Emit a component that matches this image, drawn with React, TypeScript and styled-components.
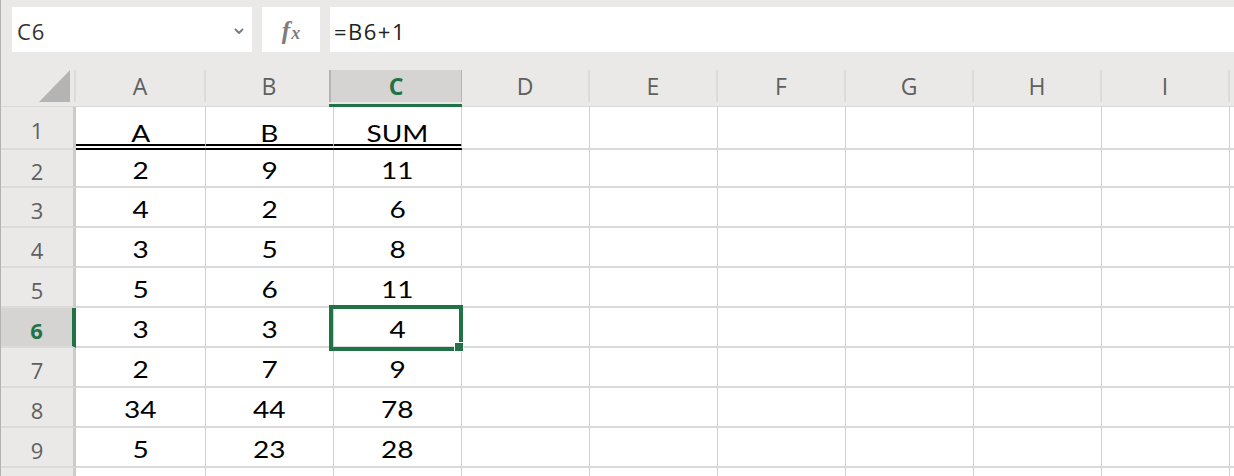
import React from 'react';
import styled, { createGlobalStyle } from 'styled-components';

const GREEN = '#217346';
const CHROME = '#eae9e8';

const GlobalStyle = createGlobalStyle`
    html, body {
        margin: 0;
        padding: 0;
        background: #fff;
        overflow: hidden;
    }

    * {
        box-sizing: border-box;
    }
`;

const Page = styled.div`
    width: 1234px;
    height: 476px;
    overflow: hidden;
    border-left: 1px solid #b3b3b3;
    font-family: "Open Sans", "Noto Sans", sans-serif;
`;

const Toolbar = styled.div`
    display: flex;
    gap: 10px;
    height: 62px;
    padding: 7px 0 0 11px;
    background: ${CHROME};
`;

const Box = styled.div`
    height: 45px;
    background: #fff;
    display: flex;
    align-items: center;
`;

const NameBox = styled(Box)`
    width: 240px;
    justify-content: space-between;
    padding: 3px 8px 0 5px;
    font-size: 22px;
    letter-spacing: 1px;
    color: #333;
`;

const FxBox = styled(Box)`
    width: 58px;
    justify-content: center;
    padding-top: 2px;
`;

const FxGlyph = styled.span`
    font-family: "Liberation Serif", "DejaVu Serif", serif;
    font-style: italic;
    font-weight: 700;
    font-size: 25px;
    color: #7d7d7d;

    & small {
        font-size: 18px;
        margin-left: 1px;
    }
`;

const FormulaBox = styled(Box)`
    flex: 1;
    padding: 3px 0 0 4px;
    font-size: 22px;
    letter-spacing: 1.5px;
    color: #222;
`;

const Sheet = styled.div`
    display: grid;
    grid-template-columns: 75px 130px repeat(8, 128px) 1fr;
    grid-template-rows: 45px 43px 38px repeat(8, 40px);
`;

const HeadCell = styled.div`
    background: ${CHROME};
    border-bottom: 1px solid #d9d9d9;
    padding: 8px 0 4px;
`;

const Corner = styled(HeadCell)`
    display: flex;
`;

const CornerInner = styled.div`
    flex: 1;
    display: flex;
    align-items: flex-end;
    justify-content: flex-end;
    padding-right: 4px;
    border-right: 2px solid #dcdbda;
`;

const Triangle = styled.div`
    width: 0;
    height: 0;
    border-left: 31px solid transparent;
    border-bottom: 32px solid #b4b4b4;
`;

const ColHead = styled(HeadCell)<{ $active?: boolean }>`
    display: flex;
    ${({ $active }) => $active && `
        margin: 0 -1px 0 -5px;
        padding-bottom: 2px;
        border-bottom: 3px solid ${GREEN};
    `}
`;

const ColLabel = styled.div<{ $active?: boolean }>`
    flex: 1;
    display: flex;
    align-items: center;
    justify-content: center;
    border-right: 2px solid #dcdbda;
    font-size: 23px;
    color: ${({ $active }) => ($active ? GREEN : '#5f5f5f')};
    font-weight: ${({ $active }) => ($active ? 700 : 400)};
    background: ${({ $active }) => ($active ? '#d5d4d3' : 'transparent')};
    ${({ $active }) => $active && `
        border-left: 2px solid #b4b4b4;
        border-right-color: #b4b4b4;
    `}
`;

const RowHead = styled.div<{ $active?: boolean }>`
    display: flex;
    align-items: center;
    justify-content: center;
    padding-top: 5px;
    background: ${({ $active }) => ($active ? '#d5d4d3' : CHROME)};
    border-right: ${({ $active }) => ($active ? `4px solid ${GREEN}` : '3px solid #cbcbcb')};
    border-bottom: 2px solid #dcdbda;
    font-size: 22px;
    color: ${({ $active }) => ($active ? GREEN : '#5f5f5f')};
    font-weight: ${({ $active }) => ($active ? 700 : 400)};
`;

const Cell = styled.div<{ $double?: boolean; $selected?: boolean; $edge?: boolean }>`
    display: flex;
    align-items: center;
    justify-content: center;
    padding-top: ${({ $double }) => ($double ? '15px' : '3px')};
    border-right: ${({ $edge }) => ($edge ? 'none' : '1px solid #d0d0d0')};
    border-bottom: ${({ $double }) => ($double ? '6px double #000' : '2px solid #dadada')};
    font-family: Lato, "Open Sans", sans-serif;
    font-size: 23px;
    color: #000;
    position: ${({ $selected }) => ($selected ? 'relative' : 'static')};
`;

const CellText = styled.span`
    display: inline-block;
    transform: scaleX(1.22);
`;

const Selection = styled.div`
    position: absolute;
    left: -5px;
    top: -3px;
    width: 134px;
    height: 46px;
    border: 4px solid ${GREEN};
    pointer-events: none;
`;

const FillHandle = styled.div`
    position: absolute;
    right: -5px;
    bottom: -5px;
    width: 10px;
    height: 10px;
    background: ${GREEN};
    border: 1px solid #fff;
`;

const columns = ['A', 'B', 'C', 'D', 'E', 'F', 'G', 'H', 'I'];
const activeCol = 2;
const activeRow = 6;

const data: (string | number)[][] = [
    ['A', 'B', 'SUM'],
    [2, 9, 11],
    [4, 2, 6],
    [3, 5, 8],
    [5, 6, 11],
    [3, 3, 4],
    [2, 7, 9],
    [34, 44, 78],
    [5, 23, 28],
    [],
];

const Chevron = () => (
    <svg width="10" height="7" viewBox="0 0 10 7">
        <path d="M1.5 1.5 L5 5 L8.5 1.5" fill="none" stroke="#7a7a7a" strokeWidth="1.8" strokeLinecap="round" strokeLinejoin="round" />
    </svg>
);

const App: React.FC = () => (
    <>
        <GlobalStyle />
        <Page>
            <Toolbar>
                <NameBox>
                    <span>C6</span>
                    <Chevron />
                </NameBox>
                <FxBox>
                    <FxGlyph>
                        f<small>x</small>
                    </FxGlyph>
                </FxBox>
                <FormulaBox>=B6+1</FormulaBox>
            </Toolbar>
            <Sheet>
                <Corner>
                    <CornerInner>
                        <Triangle />
                    </CornerInner>
                </Corner>
                {columns.map((c, i) => (
                    <ColHead key={c} $active={i === activeCol}>
                        <ColLabel $active={i === activeCol}>{c}</ColLabel>
                    </ColHead>
                ))}
                <HeadCell />
                {data.flatMap((row, r) => {
                    const rowNo = r + 1;
                    // the 10th row only peeks in at the bottom edge, its number is out of view
                    const visible = rowNo < data.length;
                    return [
                        <RowHead key={`h${rowNo}`} $active={rowNo === activeRow}>
                            {visible && rowNo}
                        </RowHead>,
                        ...columns.map((c, i) => {
                            const selected = rowNo === activeRow && i === activeCol;
                            return (
                                <Cell key={`${c}${rowNo}`} $double={rowNo === 1 && i < 3} $selected={selected}>
                                    {row[i] !== undefined && <CellText>{row[i]}</CellText>}
                                    {selected && (
                                        <Selection>
                                            <FillHandle />
                                        </Selection>
                                    )}
                                </Cell>
                            );
                        }),
                        <Cell key={`z${rowNo}`} $edge />,
                    ];
                })}
            </Sheet>
        </Page>
    </>
);

export default App;
